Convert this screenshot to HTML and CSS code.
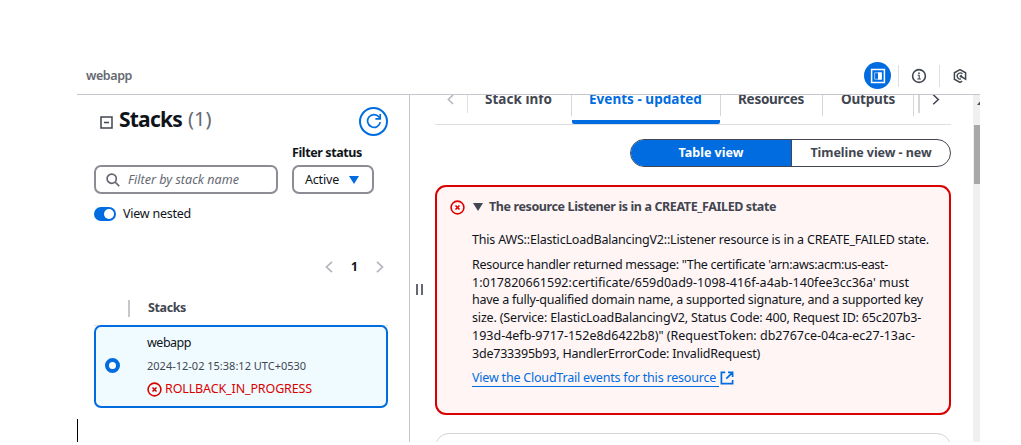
FILE: index.html
```
<!DOCTYPE html>
<html lang="en">
<head>
<meta charset="utf-8">
<title>webapp</title>
<link rel="stylesheet" href="styles.css">
</head>
<body>
<div class="window">
  <header class="topbar">
    <span class="crumb">webapp</span>
    <div class="tools">
      <span class="tool tool-active">
        <svg width="16" height="16" viewBox="0 0 16 16"><path d="M1.6 1.6h12.8v12.8H1.6z" fill="none" stroke="#fff" stroke-width="1.5"/><path d="M8 4.4h3.8v7.2H8z" fill="#fff"/><path d="M4.6 4.8h6.8v6.4H4.6z" fill="none" stroke="#fff" stroke-width=".6"/></svg>
      </span>
      <span class="tool tool-info">
        <svg width="16" height="16" viewBox="0 0 16 16" fill="none" stroke="#424650"><circle cx="8" cy="8" r="6.4" stroke-width="1.6"/><path d="M6.6 7.3h1.6v3.6M6.3 11h3.6" stroke-width="1.1"/><path d="M8 4.4v1.6" stroke-width="1.6"/></svg>
      </span>
      <span class="tool tool-agent">
        <svg width="16" height="16" viewBox="0 0 16 16" fill="none" stroke="#424650" stroke-width="1.5"><path d="M10.2 13.2L8 14.4 2.4 11.2V4.8L8 1.6l5.6 3.2v6.3L9.2 8.6"/><path d="M10.4 6A3 3 0 1 0 9 10.9" stroke-width="1.3"/><circle cx="9" cy="8.3" r="1.3" fill="#424650" stroke="none"/></svg>
      </span>
    </div>
  </header>
  <div class="panes">
    <aside class="side">
      <div class="side-head">
        <svg class="collapse" width="13" height="13" viewBox="0 0 13 13" fill="none" stroke="#424650" stroke-width="1.5"><path d="M1 1h11v11H1zM4 6.5h5"/></svg>
        <h2>Stacks</h2><span class="count">(1)</span>
        <span class="refresh"><svg width="16" height="16" viewBox="0 0 16 16" fill="none" stroke="#006ce0" stroke-width="1.7"><path d="M14.3 9.2A6.4 6.4 0 1 1 13 4l1 1.3"/><path d="M14.2 1v4.9H9.4"/></svg></span>
      </div>
      <div class="filter-label">Filter status</div>
      <div class="filters">
        <div class="search">
          <svg width="14" height="14" viewBox="0 0 14 14" fill="none" stroke="#656871" stroke-width="1.7"><circle cx="5.7" cy="5.7" r="4.6"/><path d="M9 9l4.2 4.2"/></svg>
          <span>Filter by stack name</span>
        </div>
        <div class="select"><span>Active</span><svg width="10" height="8" viewBox="0 0 10 8"><path d="M0 0h10L5 8z" fill="#006ce0"/></svg></div>
      </div>
      <div class="nested"><span class="toggle"></span><span>View nested</span></div>
      <div class="pager">
        <svg width="8" height="12" viewBox="0 0 8 12"><path d="M7 .8L1.5 6 7 11.2"/></svg>
        <b>1</b>
        <svg width="8" height="12" viewBox="0 0 8 12"><path d="M1 .8L6.5 6 1 11.2"/></svg>
      </div>
      <div class="list-head"><span>Stacks</span></div>
      <div class="stack">
        <span class="radio"></span>
        <div class="stack-info">
          <div class="stack-name">webapp</div>
          <div class="stack-date">2024-12-02 15:38:12 UTC+0530</div>
          <div class="stack-status">
            <svg width="15" height="15" viewBox="0 0 15 15" fill="none" stroke="#db0000" stroke-width="1.6"><circle cx="7.5" cy="7.5" r="6.4"/><path d="M5.5 5.5l4 4M9.5 5.5l-4 4"/></svg>
            <span>ROLLBACK_IN_PROGRESS</span>
          </div>
        </div>
      </div>
      <span class="caret"></span>
    </aside>
    <div class="handle"><i></i><i></i></div>
    <main class="detail">
      <nav class="tabs">
        <span class="tab-prev"><svg width="7" height="11" viewBox="0 0 8 12"><path d="M7 .8L1.5 6 7 11.2"/></svg></span>
        <span class="tab tab-info">Stack info</span>
        <span class="tab tab-events">Events - updated</span>
        <span class="tab tab-resources">Resources</span>
        <span class="tab tab-outputs">Outputs</span>
        <span class="tab-next"><svg width="8" height="11" viewBox="0 0 8 12"><path d="M1 .8L6.5 6 1 11.2"/></svg></span>
      </nav>
      <div class="segments"><span class="seg seg-on">Table view</span><span class="seg seg-off">Timeline view - new</span></div>
      <section class="alert">
        <div class="alert-head">
          <svg width="15" height="15" viewBox="0 0 15 15" fill="none" stroke="#db0000" stroke-width="1.6"><circle cx="7.5" cy="7.5" r="6.4"/><path d="M5.5 5.5l4 4M9.5 5.5l-4 4"/></svg>
          <svg class="expand" width="10" height="8" viewBox="0 0 10 8"><path d="M0 0h10L5 8z" fill="#424650"/></svg>
          <span>The resource Listener is in a CREATE_FAILED state</span>
        </div>
        <div class="alert-body">
          <p class="t1">This AWS::ElasticLoadBalancingV2::Listener resource is in a CREATE_FAILED state.</p>
          <p class="msg"><span class="t2">Resource handler returned message: "The certificate 'arn:aws:acm:us-east-</span><span class="t3">1:017820661592:certificate/659d0ad9-1098-416f-a4ab-140fee3cc36a' must</span><span class="t4">have a fully-qualified domain name, a supported signature, and a supported key</span><span class="t5">size. (Service: ElasticLoadBalancingV2, Status Code: 400, Request ID: 65c207b3-</span><span class="t6">193d-4efb-9717-152e8d6422b8)" (RequestToken: db2767ce-04ca-ec27-13ac-</span><span class="t7">3de733395b93, HandlerErrorCode: InvalidRequest)</span></p>
          <a class="trail"><span>View the CloudTrail events for this resource</span><svg width="14" height="14" viewBox="0 0 14 14" fill="none" stroke="#006ce0" stroke-width="1.7"><path d="M5.2 1.4H1.4v11.2h11.2V9M8 1.4h4.6V6M12.4 1.6L6.3 7.7"/></svg></a>
        </div>
      </section>
      <section class="next-card"></section>
    </main>
    <div class="scroll"><svg width="7" height="30" viewBox="0 0 7 30"><path d="M4 10L7 6.5V10z" fill="#505050"/></svg><i></i></div>
  </div>
</div>
</body>
</html>
```
FILE: styles.css
```
* { box-sizing: border-box; }
body {
  margin: 0;
  background: #fff;
  color: #0f141a;
  font: 400 12.5px/18px "Noto Sans", sans-serif;
  white-space: nowrap;
  overflow: hidden;
}
h2, p { margin: 0; }
svg { display: block; flex: none; }
.window { width: 903px; height: 442px; margin-left: 77px; overflow: hidden; display: flex; flex-direction: column; }

.topbar {
  height: 95px;
  padding: 57px 0 0 9px;
  border-bottom: 1px solid #c6c6cd;
  display: flex;
  justify-content: space-between;
  align-items: center;
  flex: none;
}
.crumb { color: #656871; font-weight: 600; letter-spacing: -.41px; }
.tools { display: flex; align-items: center; }
.tool { height: 22px; display: grid; place-items: center; border-left: 1px solid #dedee3; }
.tool-info { width: 41px; }
.tool-agent { width: 41px; }
.tool-active { width: 27px; height: 27px; border: 0; border-radius: 50%; background: #006ce0; margin-right: 7px; }

.panes { display: flex; flex: 1; min-height: 0; }
.side { width: 333px; padding: 0 21px 0 17px; border-right: 1px solid #c6c6cd; display: flex; flex-direction: column; position: relative; flex: none; }
.side-head { height: 53px; padding-left: 6px; display: flex; align-items: center; }
.collapse { margin-top: 2px; }
h2 { font-size: 21px; line-height: 28px; letter-spacing: -.78px; margin: -5px 0 0 6px; }
.count { font-size: 20px; line-height: 28px; color: #656871; margin: -5px 0 0 6px; }
.refresh { width: 29px; height: 29px; margin: -1px 0 0 auto; border: 2px solid #006ce0; border-radius: 50%; display: grid; place-items: center; }
.filter-label { margin: -4px 0 3px 198px; font-weight: 700; letter-spacing: -.39px; }
.filters { display: flex; gap: 14px; }
.search, .select { height: 29px; border: 2px solid #8c8c94; border-radius: 7px; display: flex; align-items: center; background: #fff; }
.search { width: 184px; padding-left: 10px; gap: 8px; color: #656871; font-style: italic; letter-spacing: .03px; }
.select { width: 82px; padding-left: 11px; gap: 10px; letter-spacing: -.19px; }
.nested { display: flex; align-items: center; gap: 7px; margin-top: 11px; letter-spacing: -.24px; }
.toggle { width: 22px; height: 14px; border-radius: 7px; background: #006ce0; display: flex; justify-content: flex-end; align-items: center; padding-right: 2px; }
.toggle::after { content: ""; width: 10px; height: 10px; border-radius: 50%; background: #fff; }
.pager { display: flex; align-items: center; justify-content: flex-end; gap: 18px; margin-top: 35px; padding-right: 4px; height: 18px; }
.pager b { font-size: 12px; width: 7px; }
.pager path { fill: none; stroke: #b4b4bb; stroke-width: 1.7; }
.list-head { height: 50px; padding: 24px 0 0 34px; border-bottom: 1px solid #dedee3; }
.list-head span { display: block; height: 17px; line-height: 16px; padding-left: 18px; border-left: 2px solid #c6c6cd; color: #424650; font-weight: 700; letter-spacing: -.38px; }
.stack { height: 83px; border: 2px solid #006ce0; border-radius: 7px; background: #f0fbff; display: flex; padding: 7px 0 0 9px; gap: 28px; margin-top: -1px; flex: none; }
.radio { width: 15px; height: 15px; border: 4.5px solid #006ce0; border-radius: 50%; background: #fff; margin-top: 24px; }
.stack-info { margin-left: -1px; }
.stack-name { letter-spacing: -.49px; margin-bottom: 5px; }
.stack-date { font-size: 11px; color: #424650; margin-bottom: 5px; }
.stack-status { display: flex; align-items: center; gap: 3px; color: #db0000; letter-spacing: -.13px; }
.caret { position: absolute; left: 0; bottom: 0; width: 1px; height: 23px; background: #000; }

.handle { width: 25px; padding: 189px 0 0 6px; display: flex; gap: 3px; flex: none; }
.handle i { width: 2px; height: 11px; background: #656871; }
.detail { width: 516px; display: flex; flex-direction: column; flex: none; }
.tabs { height: 30px; border-bottom: 1px solid #dedee3; display: flex; align-items: flex-start; color: #424650; font-size: 13.5px; font-weight: 700; line-height: 8px; flex: none; clip-path: inset(0); }
.tabs path { fill: none; stroke-width: 1.7; }
.tab-prev { width: 33px; height: 18px; padding-left: 12px; border-right: 1px solid #dedee3; }
.tab-prev path { stroke: #b4b4bb; }
.tab-prev svg, .tab-next svg { margin-top: -1px; }
.tab { height: 21px; border-right: 1px solid #d5d5da; }
.tab-info { width: 104px; padding-left: 17px; letter-spacing: .03px; }
.tab-events { width: 148px; height: 29px; padding-left: 17px; color: #006ce0; letter-spacing: .03px; border-right: 0; border-bottom: 4px solid #006ce0; border-radius: 0 0 2px 2px; }
.tab-resources { width: 103px; padding-left: 17px; letter-spacing: -.27px; border-left: 1px solid #d5d5da; }
.tab-outputs { width: 91px; padding-left: 18px; letter-spacing: -.18px; }
.tab-next { height: 18px; border-left: 2px solid #d5d5da; margin-left: 4px; padding-left: 12px; }
.tab-next path { stroke: #424650; }
.segments { width: 321px; height: 28px; margin: 14px 0 0 auto; border: 1.6px solid #424650; border-radius: 14px; display: flex; overflow: hidden; font-weight: 700; line-height: 26px; text-align: center; flex: none; }
.seg-on { width: 160px; background: #006ce0; color: #fff; }
.seg-off { flex: 1; color: #424650; border-left: 1px solid #424650; letter-spacing: -.06px; }
.alert { height: 230px; margin-top: 18px; border: 2px solid #db0000; border-radius: 11px; background: #fff5f5; padding: 11px 0 0 13px; flex: none; }
.alert-head { display: flex; align-items: center; color: #424650; font-weight: 700; letter-spacing: -.386px; }
.expand { margin: 0 6px 0 8px; }
.alert-body { padding-left: 22px; }
.t1 { margin: 15px 0 7px; letter-spacing: -.193px; }
.msg span { display: block; line-height: 17.7px; }
.msg .t2 { letter-spacing: -.302px; }
.msg .t3 { letter-spacing: .015px; }
.msg .t4 { letter-spacing: -.247px; }
.msg .t5 { letter-spacing: -.162px; }
.msg .t6 { letter-spacing: -.003px; }
.msg .t7 { letter-spacing: -.214px; }
.trail { display: flex; align-items: center; gap: 1px; margin-top: 8px; color: #006ce0; letter-spacing: -.205px; }
.trail span { height: 17px; line-height: 15px; padding-right: 3px; border-bottom: 1px solid #006ce0; }
.trail svg { margin-top: -2px; }
.next-card { height: 60px; margin-top: 18px; border: 1px solid #d5d5da; border-radius: 14px; flex: none; }
.scroll { width: 7px; margin-left: auto; background: #f0f0f0; }
.scroll i { display: block; width: 6px; height: 59px; margin-left: 1px; background: #a8a8a8; }
```
